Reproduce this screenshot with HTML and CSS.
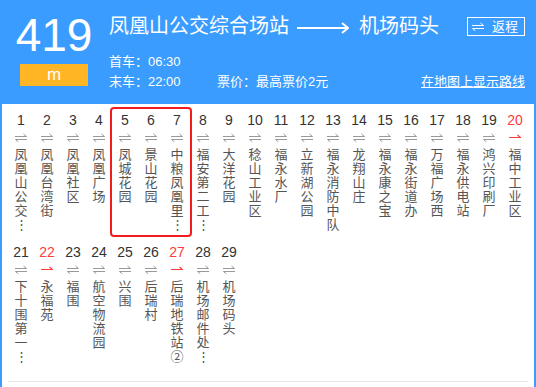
FILE: index.html
```html
<!DOCTYPE html>
<html>
<head>
    <meta charset="utf-8">
    <meta name="viewport" content="width=device-width, initial-scale=1.0">
    <link rel="stylesheet" href="styles.css">
</head>
<body>
    <svg class="defs" width="0" height="0">
        <symbol id="both" viewBox="0 0 12 9">
            <path d="M0 3.5H11.5L8.5 1M12 6.5H0.5L3.5 9" fill="none" stroke="currentColor" stroke-width="1"/>
        </symbol>
        <symbol id="one" viewBox="0 0 12 9">
            <path d="M0 4.5H11.5L8.5 2" fill="none" stroke="currentColor" stroke-width="1.2"/>
        </symbol>
    </svg>

    <div class="panel">
        <div class="header">
            <div class="line-no">
                <div class="num">419</div>
                <div class="badge">m</div>
            </div>
            <div class="line-info">
                <div class="title-row">
                    <span class="stop-name">凤凰山公交综合场站</span>
                    <svg class="way" width="52" height="12" viewBox="0 0 52 12">
                        <path d="M0 6H50" stroke="#fff" stroke-width="2.2"/>
                        <path d="M45 1L51 6L45 11" fill="none" stroke="#fff" stroke-width="2"/>
                    </svg>
                    <span class="stop-name">机场码头</span>
                    <button class="back">
                        <svg width="12" height="9"><use href="#both"/></svg>
                        返程
                    </button>
                </div>
                <div class="meta">首车：06:30</div>
                <div class="meta meta-row">
                    <span class="last">末车：22:00</span>
                    <span>票价：最高票价2元</span>
                    <a class="map-link" href="#">在地图上显示路线</a>
                </div>
            </div>
        </div>

        <div class="stops">
            <div class="stop"><span class="idx">1</span><svg class="dir"><use href="#both"/></svg><span class="name">凤凰山公交⋮</span></div>
            <div class="stop"><span class="idx">2</span><svg class="dir"><use href="#both"/></svg><span class="name">凤凰台湾街</span></div>
            <div class="stop"><span class="idx">3</span><svg class="dir"><use href="#both"/></svg><span class="name">凤凰社区</span></div>
            <div class="stop"><span class="idx">4</span><svg class="dir"><use href="#both"/></svg><span class="name">凤凰广场</span></div>
            <div class="stop-group">
                <div class="stop"><span class="idx">5</span><svg class="dir"><use href="#both"/></svg><span class="name">凤城花园</span></div>
                <div class="stop"><span class="idx">6</span><svg class="dir"><use href="#both"/></svg><span class="name">景山花园</span></div>
                <div class="stop"><span class="idx">7</span><svg class="dir"><use href="#both"/></svg><span class="name">中粮凤凰里⋮</span></div>
            </div>
            <div class="stop"><span class="idx">8</span><svg class="dir"><use href="#both"/></svg><span class="name">福安第二工⋮</span></div>
            <div class="stop"><span class="idx">9</span><svg class="dir"><use href="#both"/></svg><span class="name">大洋花园</span></div>
            <div class="stop"><span class="idx">10</span><svg class="dir"><use href="#both"/></svg><span class="name">稔山工业区</span></div>
            <div class="stop"><span class="idx">11</span><svg class="dir"><use href="#both"/></svg><span class="name">福永水厂</span></div>
            <div class="stop"><span class="idx">12</span><svg class="dir"><use href="#both"/></svg><span class="name">立新湖公园</span></div>
            <div class="stop"><span class="idx">13</span><svg class="dir"><use href="#both"/></svg><span class="name">福永消防中队</span></div>
            <div class="stop"><span class="idx">14</span><svg class="dir"><use href="#both"/></svg><span class="name">龙翔山庄</span></div>
            <div class="stop"><span class="idx">15</span><svg class="dir"><use href="#both"/></svg><span class="name">福永康之宝</span></div>
            <div class="stop"><span class="idx">16</span><svg class="dir"><use href="#both"/></svg><span class="name">福永街道办</span></div>
            <div class="stop"><span class="idx">17</span><svg class="dir"><use href="#both"/></svg><span class="name">万福广场西</span></div>
            <div class="stop"><span class="idx">18</span><svg class="dir"><use href="#both"/></svg><span class="name">福永供电站</span></div>
            <div class="stop"><span class="idx">19</span><svg class="dir"><use href="#both"/></svg><span class="name">鸿兴印刷厂</span></div>
            <div class="stop oneway"><span class="idx">20</span><svg class="dir"><use href="#one"/></svg><span class="name">福中工业区</span></div>
            <div class="stop"><span class="idx">21</span><svg class="dir"><use href="#both"/></svg><span class="name">下十围第一⋮</span></div>
            <div class="stop oneway"><span class="idx">22</span><svg class="dir"><use href="#one"/></svg><span class="name">永福苑</span></div>
            <div class="stop"><span class="idx">23</span><svg class="dir"><use href="#both"/></svg><span class="name">福围</span></div>
            <div class="stop"><span class="idx">24</span><svg class="dir"><use href="#both"/></svg><span class="name">航空物流园</span></div>
            <div class="stop"><span class="idx">25</span><svg class="dir"><use href="#both"/></svg><span class="name">兴围</span></div>
            <div class="stop"><span class="idx">26</span><svg class="dir"><use href="#both"/></svg><span class="name">后瑞村</span></div>
            <div class="stop oneway"><span class="idx">27</span><svg class="dir"><use href="#one"/></svg><span class="name">后瑞地铁站②</span></div>
            <div class="stop"><span class="idx">28</span><svg class="dir"><use href="#both"/></svg><span class="name">机场邮件处⋮</span></div>
            <div class="stop"><span class="idx">29</span><svg class="dir"><use href="#both"/></svg><span class="name">机场码头</span></div>
        </div>
    </div>
</body>
</html>
```

FILE: styles.css
```css
html, body {
    margin: 0;
    padding: 0;
    background: #fff;
    font-family: "Liberation Sans", "Noto Sans CJK SC", sans-serif;
}

.defs {
    position: absolute;
}

.panel {
    min-height: 100vh;
    box-sizing: border-box;
    border-left: 2px solid #3b9cff;
    border-right: 2px solid #3b9cff;
}

/* 顶部线路信息 */
.header {
    display: flex;
    height: 104px;
    margin: 0 -2px;
    background: #3b9cff;
    color: #fff;
}

.line-no {
    width: 108px;
    display: flex;
    flex-direction: column;
    align-items: center;
    padding-top: 10px;
}

.line-no .num {
    font-size: 46px;
    line-height: 50px;
}

.badge {
    margin-top: 4px;
    width: 68px;
    height: 22px;
    line-height: 21px;
    background: #ffb524;
    text-align: center;
    font-size: 17px;
}

.line-info {
    flex: 1;
    padding: 12px 11px 0 1px;
}

.title-row {
    display: flex;
    align-items: center;
    height: 28px;
}

.stop-name {
    font-size: 20px;
    line-height: 28px;
}

.way {
    margin: 3px 10px 0 8px;
}

.back {
    margin-left: auto;
    display: flex;
    align-items: center;
    gap: 8px;
    height: 19px;
    padding: 0 6px 0 4px;
    border: 1px solid #fff;
    background: none;
    color: #fff;
    font-family: inherit;
    font-size: 13px;
    line-height: 17px;
}

.meta {
    font-size: 13px;
    line-height: 20px;
}

.meta:first-of-type {
    margin-top: 0;
}

.title-row + .meta {
    margin-top: 12px;
}

.meta-row {
    display: flex;
}

.last {
    width: 108px;
}

.map-link {
    margin-left: auto;
    color: #fff;
    text-decoration: underline;
}

/* 站点列表 */
.stops {
    display: flex;
    flex-wrap: wrap;
    width: 520px;
    margin-left: 6px;
    padding: 1px 0 12px;
    border-bottom: 1px solid #e6e6e6;
}

.stop-group {
    display: flex;
    position: relative;
}

.stop-group::after {
    content: "";
    position: absolute;
    top: 2px;
    bottom: 0;
    left: -2px;
    right: -2px;
    border: 2px solid #f21c1c;
    border-radius: 4px;
}

.stop {
    width: 26px;
    height: 132px;
    box-sizing: border-box;
    padding-top: 6px;
    display: flex;
    flex-direction: column;
    align-items: center;
}

.idx {
    font-size: 14px;
    line-height: 18px;
    color: #333;
}

.dir {
    width: 12px;
    height: 9px;
    margin-top: 4px;
    color: #999;
}

.name {
    margin-top: 6px;
    width: 13px;
    font-size: 13px;
    line-height: 14px;
    word-break: break-all;
    text-align: center;
    color: #555;
}

.oneway .idx,
.oneway .dir {
    color: #ff3b3b;
}
```
